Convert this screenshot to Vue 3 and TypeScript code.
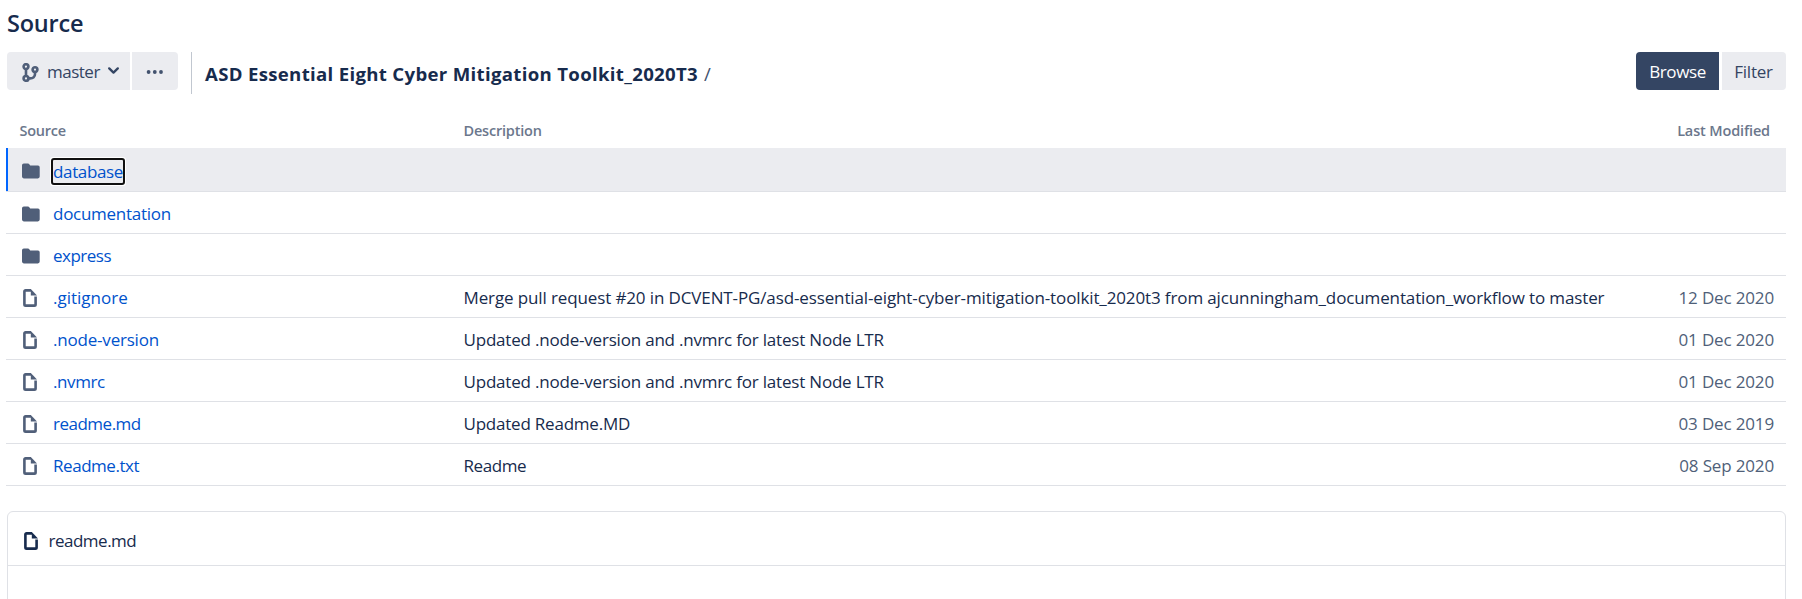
<script setup lang="ts">
interface Entry {
  name: string
  kind: 'folder' | 'file'
  description: string
  modified: string
  nameTracking: number
  descTracking: number
}

const entries: Entry[] = [
  { name: 'database', kind: 'folder', description: '', modified: '', nameTracking: -0.35, descTracking: 0 },
  { name: 'documentation', kind: 'folder', description: '', modified: '', nameTracking: -0.27, descTracking: 0 },
  { name: 'express', kind: 'folder', description: '', modified: '', nameTracking: -0.5, descTracking: 0 },
  {
    name: '.gitignore',
    kind: 'file',
    description:
      'Merge pull request #20 in DCVENT-PG/asd-essential-eight-cyber-mitigation-toolkit_2020t3 from ajcunningham_documentation_workflow to master',
    modified: '12 Dec 2020',
    nameTracking: 0,
    descTracking: -0.123,
  },
  { name: '.node-version', kind: 'file', description: 'Updated .node-version and .nvmrc for latest Node LTR', modified: '01 Dec 2020', nameTracking: -0.2, descTracking: -0.2 },
  { name: '.nvmrc', kind: 'file', description: 'Updated .node-version and .nvmrc for latest Node LTR', modified: '01 Dec 2020', nameTracking: -0.4, descTracking: -0.2 },
  { name: 'readme.md', kind: 'file', description: 'Updated Readme.MD', modified: '03 Dec 2019', nameTracking: -0.5, descTracking: -0.22 },
  { name: 'Readme.txt', kind: 'file', description: 'Readme', modified: '08 Sep 2020', nameTracking: -0.45, descTracking: -0.4 },
]
</script>

<template>
  <main class="page">
    <h1 class="heading">Source</h1>

    <div class="toolbar">
      <button class="btn branch">
        <svg class="branch-icon" width="17" height="19" viewBox="0 0 17 19" fill="none" stroke="#505f79" stroke-width="2.6">
          <circle cx="4" cy="3.6" r="2.4" />
          <circle cx="4" cy="15.4" r="2.4" />
          <circle cx="13" cy="6.6" r="2.4" />
          <path d="M4 5.8v7.4M6.4 15.4h1.8c2.8 0 4.8-1.6 4.8-4.4V9" />
        </svg>
        <span class="branch-name">master</span>
        <svg class="chevron" width="11" height="8" viewBox="0 0 11 8" fill="none" stroke="#344563" stroke-width="2.3">
          <path d="M1.2 1.4l4.3 4.2 4.3-4.2" stroke-linecap="round" stroke-linejoin="round" />
        </svg>
      </button>
      <button class="btn more" aria-label="More actions">
        <svg width="18" height="4" viewBox="0 0 18 4" fill="#42526e">
          <circle cx="2.6" cy="2" r="1.9" />
          <circle cx="8.8" cy="2" r="1.9" />
          <circle cx="15" cy="2" r="1.9" />
        </svg>
      </button>
      <div class="crumbs"><strong>ASD Essential Eight Cyber Mitigation Toolkit_2020T3</strong><span class="slash">/</span></div>
      <div class="modes">
        <button class="btn browse">Browse</button>
        <button class="btn filter">Filter</button>
      </div>
    </div>

    <section class="files">
      <div class="row head">
        <span class="h-source">Source</span>
        <span class="h-desc">Description</span>
        <span class="h-mod">Last Modified</span>
      </div>
      <div v-for="(e, i) in entries" :key="e.name" class="row" :class="{ focused: i === 0 }">
        <div class="name-cell">
          <svg v-if="e.kind === 'folder'" class="icon" width="18" height="16" viewBox="0 0 18 16" fill="#505f79">
            <path d="M0 2.3Q0 .5 1.8.5H6q.8 0 1.3.7l.9 1.3H16q1.7 0 1.7 1.7v9.4q0 1.8-1.8 1.8H1.8Q0 15.4 0 13.6z" />
          </svg>
          <svg v-else class="icon file" width="14" height="18" viewBox="0 0 14 18" fill="none" stroke="#505f79" stroke-width="2.6">
            <path d="M8 1.4H2.6q-1.2 0-1.2 1.2v12.8q0 1.2 1.2 1.2h8.8q1.2 0 1.2-1.2V7.6" />
            <path d="M7.8.1v6.5H14z" fill="#505f79" stroke="none" />
          </svg>
          <a class="link" :style="{ letterSpacing: e.nameTracking + 'px' }">{{ e.name }}</a>
        </div>
        <span class="desc" :style="{ letterSpacing: e.descTracking + 'px' }">{{ e.description }}</span>
        <span class="date">{{ e.modified }}</span>
      </div>
    </section>

    <section class="preview">
      <header class="preview-head">
        <svg width="14" height="18" viewBox="0 0 14 18" fill="none" stroke="#172b4d" stroke-width="2.6">
          <path d="M8 1.4H2.6q-1.2 0-1.2 1.2v12.8q0 1.2 1.2 1.2h8.8q1.2 0 1.2-1.2V7.6" />
          <path d="M7.8.1v6.5H14z" fill="#172b4d" stroke="none" />
        </svg>
        <span>readme.md</span>
      </header>
    </section>
  </main>
</template>

<style>
html,
body {
  background: #fff;
  overflow: hidden;
}
</style>

<style scoped>
.page {
  box-sizing: border-box;
  width: 1802px;
  height: 599px;
  padding: 8px 16px 0 7px;
  overflow: hidden;
  color: #172b4d;
  font: 17px/24px 'Open Sans', 'Noto Sans', sans-serif;
}
.heading {
  margin: 0;
  height: 44px;
  font-size: 23.5px;
  line-height: 30px;
  font-weight: 600;
  letter-spacing: -0.2px;
}
.toolbar {
  display: flex;
  height: 42px;
}
.btn {
  display: flex;
  align-items: center;
  box-sizing: border-box;
  height: 38px;
  border: 0;
  padding: 0;
  background: #ebecf0;
  color: #344563;
  font: inherit;
}
.branch {
  width: 123px;
  padding-left: 15px;
  border-radius: 4px 0 0 4px;
}
.branch-icon {
  margin-top: 2px;
}
.branch-name {
  width: 61px;
  margin: 2px 0 0 8px;
  text-align: left;
  letter-spacing: -0.5px;
}
.more {
  width: 46px;
  margin-left: 2px;
  padding: 2px 0 0 14px;
  border-radius: 0 4px 4px 0;
}
.crumbs {
  display: flex;
  margin-left: 13px;
  padding: 10px 0 0 13px;
  border-left: 1px solid #c1c7d0;
}
.crumbs strong {
  width: 493px;
  white-space: nowrap;
  font-size: 18.6px;
  font-weight: 700;
  letter-spacing: 0.32px;
}
.slash {
  margin-left: 6px;
  font-size: 18.6px;
  color: #42526e;
}
.modes {
  display: flex;
  gap: 3px;
  margin-left: auto;
}
.browse {
  justify-content: center;
  width: 83px;
  padding-top: 2px;
  border-radius: 4px 0 0 4px;
  background: #344563;
  color: #fff;
  letter-spacing: -0.4px;
}
.filter {
  justify-content: center;
  width: 64px;
  padding: 2px 1px 0 0;
  border-radius: 0 4px 4px 0;
  letter-spacing: -0.25px;
}
.row {
  display: grid;
  grid-template-columns: 457.5px 1fr auto;
  align-items: center;
  box-sizing: border-box;
  height: 42px;
  margin-left: -1px;
  padding: 2px 12px 0 0;
  border-bottom: 1px solid #dfe1e6;
}
.row.head {
  height: 54px;
  padding: 20px 16px 0 0;
  border: 0;
  color: #6b778c;
  font-size: 14.5px;
  font-weight: 600;
}
.h-source {
  padding-left: 13.5px;
  letter-spacing: -0.25px;
}
.h-desc {
  letter-spacing: -0.2px;
}
.h-mod {
  letter-spacing: -0.15px;
}
.row.focused {
  height: 44px;
  padding-top: 3px;
  background: #ebecf0;
  box-shadow: inset 2px 0 #0065ff;
}
.name-cell {
  display: flex;
  align-items: center;
}
.icon {
  width: 18px;
  margin-left: 16px;
}
.icon.file {
  width: 14px;
  margin: 0 3px 0 17px;
}
.link {
  margin-left: 13px;
  color: #0052cc;
}
.focused .link {
  height: 23px;
  line-height: 24px;
  outline: 2px solid #101010;
  border-radius: 1px;
  box-shadow: 0 0 0 3px #fff;
}
.desc {
  white-space: nowrap;
}
.date {
  color: #505f79;
  letter-spacing: -0.15px;
}
.preview {
  height: 120px;
  margin-top: 25px;
  border: 1px solid #dfe1e6;
  border-radius: 6px;
}
.preview-head {
  display: flex;
  align-items: center;
  gap: 10.5px;
  height: 54px;
  padding: 4px 0 0 16px;
  box-sizing: border-box;
  border-bottom: 1px solid #dfe1e6;
  letter-spacing: -0.5px;
}
</style>
